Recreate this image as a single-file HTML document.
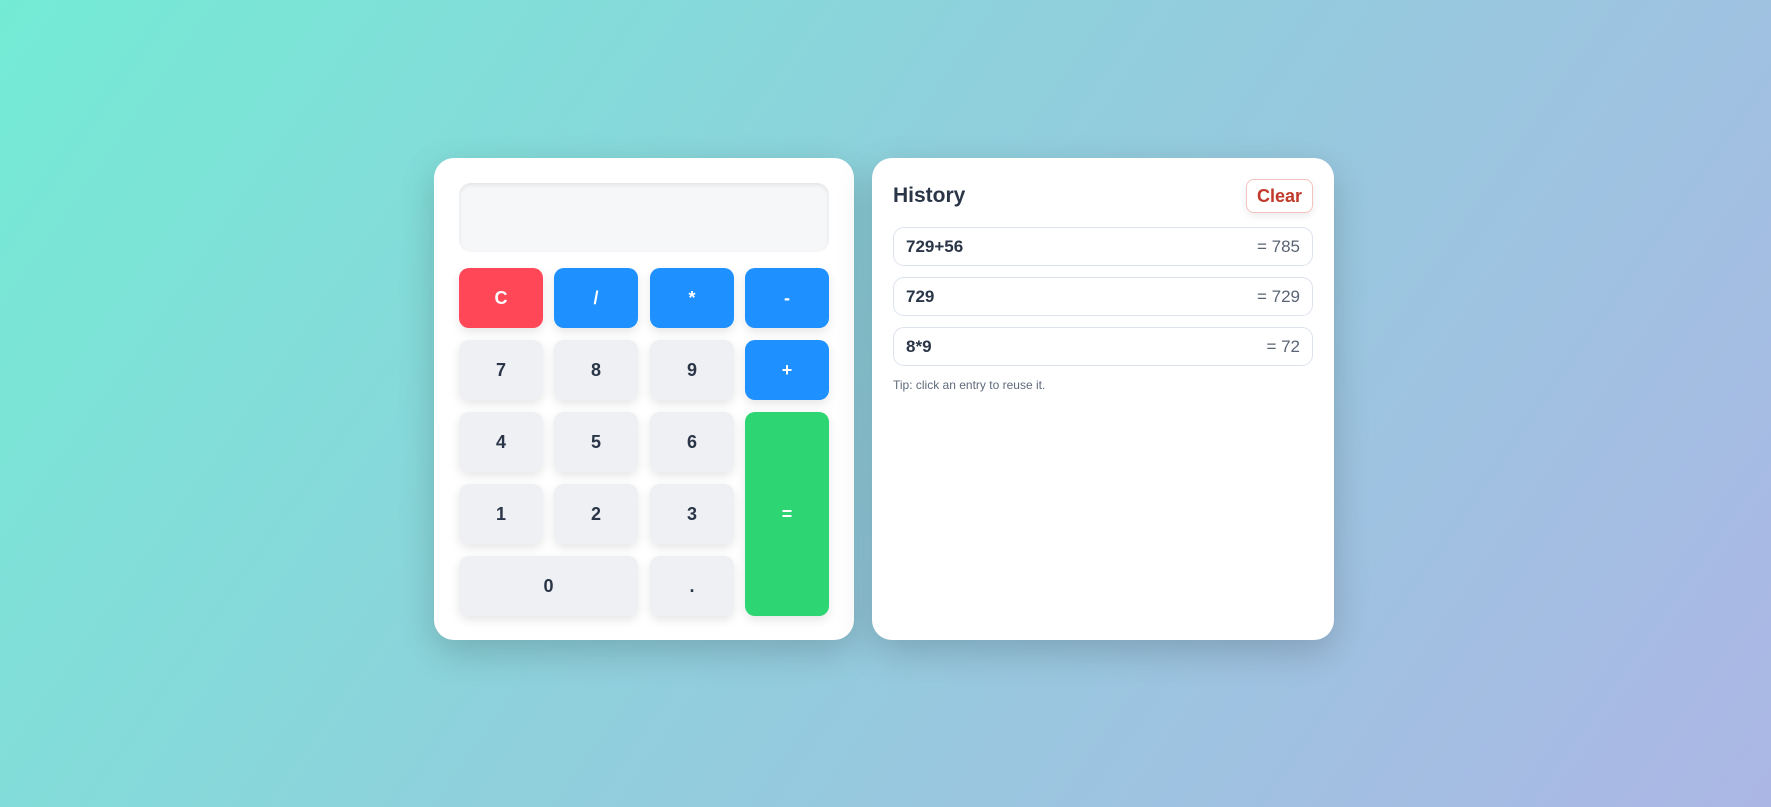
<!DOCTYPE html>
<html><head><style>
*{box-sizing:border-box;margin:0;padding:0}
body{width:1771px;height:807px;overflow:hidden;font-family:"Liberation Sans",Arial,sans-serif;background:linear-gradient(125deg,#74ebd5 0%,#8fd0dc 45%,#acb6e5 100%);position:relative}
.card{position:absolute;background:#fff;border-radius:20px;box-shadow:0 12px 36px rgba(0,0,0,.18)}
.calc{left:434px;top:158px;width:420px;height:482px}
.hist{left:872px;top:158px;width:462px;height:482px}
.disp{position:absolute;left:25px;top:25px;width:370px;height:69px;background:#f6f7f9;border-radius:12px;box-shadow:inset 0 2px 5px rgba(0,0,0,.08)}
.b{position:absolute;width:84px;height:60px;border-radius:10px;display:flex;align-items:center;justify-content:center;font-weight:bold;font-size:18px;background:#eff0f4;color:#2a3547;box-shadow:0 4px 10px rgba(0,0,0,.1)}
.blue{background:#1e90ff;color:#fff}.red{background:#ff4757;color:#fff}.green{background:#2ed573;color:#fff}
.h{position:absolute;font-weight:bold;font-size:21px;color:#2a3547;left:21px;top:26px}
.clr{position:absolute;left:374px;top:21px;width:67px;height:34px;border:1px solid #f3c3bf;border-radius:8px;color:#c0392b;font-weight:bold;font-size:18px;display:flex;align-items:center;justify-content:center;box-shadow:0 3px 8px rgba(0,0,0,.08)}
.e{position:absolute;left:21px;width:420px;height:39px;border:1px solid #dde3ee;border-radius:11px;display:flex;justify-content:space-between;align-items:center;padding:0 12px;font-size:17px}
.e b{color:#2a3547}.e span{color:#5a6475}
.tip{position:absolute;left:21px;top:220px;font-size:12px;color:#5f6b7c}
</style></head><body>
<div class="card calc">
<div class="disp"></div>
<div class="b red" style="left:25px;top:110px">C</div>
<div class="b blue" style="left:120px;top:110px">/</div>
<div class="b blue" style="left:216px;top:110px">*</div>
<div class="b blue" style="left:311px;top:110px">-</div>
<div class="b" style="left:25px;top:182px">7</div>
<div class="b" style="left:120px;top:182px">8</div>
<div class="b" style="left:216px;top:182px">9</div>
<div class="b blue" style="left:311px;top:182px">+</div>
<div class="b" style="left:25px;top:254px">4</div>
<div class="b" style="left:120px;top:254px">5</div>
<div class="b" style="left:216px;top:254px">6</div>
<div class="b green" style="left:311px;top:254px;height:204px">=</div>
<div class="b" style="left:25px;top:326px">1</div>
<div class="b" style="left:120px;top:326px">2</div>
<div class="b" style="left:216px;top:326px">3</div>
<div class="b" style="left:25px;top:398px;width:179px">0</div>
<div class="b" style="left:216px;top:398px">.</div>
</div>
<div class="card hist">
<div class="h">History</div>
<div class="clr">Clear</div>
<div class="e" style="top:69px"><b>729+56</b><span>= 785</span></div>
<div class="e" style="top:119px"><b>729</b><span>= 729</span></div>
<div class="e" style="top:169px"><b>8*9</b><span>= 72</span></div>
<div class="tip">Tip: click an entry to reuse it.</div>
</div>
</body></html>
